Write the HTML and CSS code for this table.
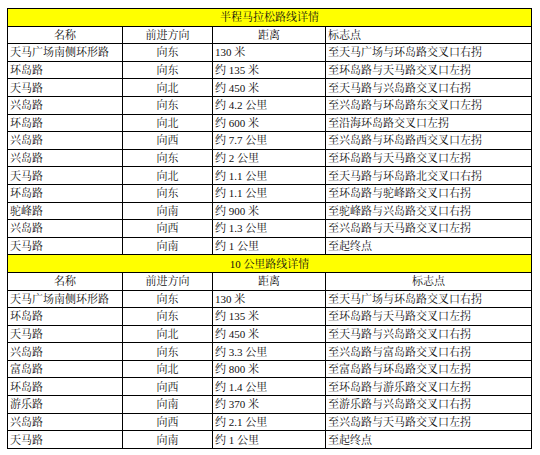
FILE: index.html
```html
<!DOCTYPE html>
<html lang="zh-CN">
<head>
<meta charset="utf-8">
<title>路线详情</title>
<link rel="stylesheet" href="styles.css">
</head>
<body>
<table class="route">
<colgroup>
<col class="c-name"><col class="c-dir"><col class="c-dist"><col class="c-mark">
</colgroup>
<tbody>
<tr class="title"><td colspan="4">半程马拉松路线详情</td></tr>
<tr class="hdr"><td class="ctr">名称</td><td class="ctr">前进方向</td><td class="ctr">距离</td><td>标志点</td></tr>
<tr><td>天马广场南侧环形路</td><td class="ctr">向东</td><td>130 米</td><td>至天马广场与环岛路交叉口右拐</td></tr>
<tr><td>环岛路</td><td class="ctr">向东</td><td>约 135 米</td><td>至环岛路与天马路交叉口左拐</td></tr>
<tr><td>天马路</td><td class="ctr">向北</td><td>约 450 米</td><td>至天马路与兴岛路交叉口右拐</td></tr>
<tr><td>兴岛路</td><td class="ctr">向东</td><td>约 4.2 公里</td><td>至兴岛路与环岛路东交叉口左拐</td></tr>
<tr><td>环岛路</td><td class="ctr">向北</td><td>约 600 米</td><td>至沿海环岛路交叉口左拐</td></tr>
<tr><td>兴岛路</td><td class="ctr">向西</td><td>约 7.7 公里</td><td>至兴岛路与环岛路西交叉口左拐</td></tr>
<tr><td>兴岛路</td><td class="ctr">向东</td><td>约 2 公里</td><td>至环岛路与天马路交叉口左拐</td></tr>
<tr><td>天马路</td><td class="ctr">向北</td><td>约 1.1 公里</td><td>至天马路与环岛路北交叉口右拐</td></tr>
<tr><td>环岛路</td><td class="ctr">向东</td><td>约 1.1 公里</td><td>至环岛路与驼峰路交叉口右拐</td></tr>
<tr><td>驼峰路</td><td class="ctr">向南</td><td>约 900 米</td><td>至驼峰路与兴岛路交叉口右拐</td></tr>
<tr><td>兴岛路</td><td class="ctr">向西</td><td>约 1.3 公里</td><td>至兴岛路与天马路交叉口左拐</td></tr>
<tr><td>天马路</td><td class="ctr">向南</td><td>约 1 公里</td><td>至起终点</td></tr>
<tr class="title"><td colspan="4">10 公里路线详情</td></tr>
<tr class="hdr"><td class="ctr">名称</td><td class="ctr">前进方向</td><td class="ctr">距离</td><td class="ctr">标志点</td></tr>
<tr><td>天马广场南侧环形路</td><td class="ctr">向东</td><td>130 米</td><td>至天马广场与环岛路交叉口右拐</td></tr>
<tr><td>环岛路</td><td class="ctr">向东</td><td>约 135 米</td><td>至环岛路与天马路交叉口左拐</td></tr>
<tr><td>天马路</td><td class="ctr">向北</td><td>约 450 米</td><td>至天马路与兴岛路交叉口右拐</td></tr>
<tr><td>兴岛路</td><td class="ctr">向东</td><td>约 3.3 公里</td><td>至兴岛路与富岛路交叉口右拐</td></tr>
<tr><td>富岛路</td><td class="ctr">向北</td><td>约 800 米</td><td>至富岛路与环岛路交叉口左拐</td></tr>
<tr><td>环岛路</td><td class="ctr">向西</td><td>约 1.4 公里</td><td>至环岛路与游乐路交叉口左拐</td></tr>
<tr><td>游乐路</td><td class="ctr">向南</td><td>约 370 米</td><td>至游乐路与兴岛路交叉口右拐</td></tr>
<tr><td>兴岛路</td><td class="ctr">向西</td><td>约 2.1 公里</td><td>至兴岛路与天马路交叉口左拐</td></tr>
<tr><td>天马路</td><td class="ctr">向南</td><td>约 1 公里</td><td>至起终点</td></tr>
</tbody>
</table>
</body>
</html>
```

FILE: styles.css
```css
html, body {
  margin: 0;
  padding: 0;
  background: #ffffff;
}

body {
  font-family: "Liberation Serif", "Noto Serif CJK SC", "Noto Sans CJK SC", serif;
  font-size: 11px;
  color: #111111;
}

.route {
  margin: 8px 0 0 7px;
  width: 524px;
  table-layout: fixed;
  border-collapse: collapse;
}

.c-name { width: 115px; }
.c-dir { width: 90px; }
.c-dist { width: 113px; }
.c-mark { width: 206px; }

.route td {
  border: 1px solid #000000;
  height: 17.6px;
  padding: 0 2px;
  box-sizing: border-box;
  line-height: 14px;
  white-space: nowrap;
  overflow: hidden;
  vertical-align: middle;
}

.route .ctr {
  text-align: center;
}

.title td {
  background: #ffff00;
  text-align: center;
}
```
